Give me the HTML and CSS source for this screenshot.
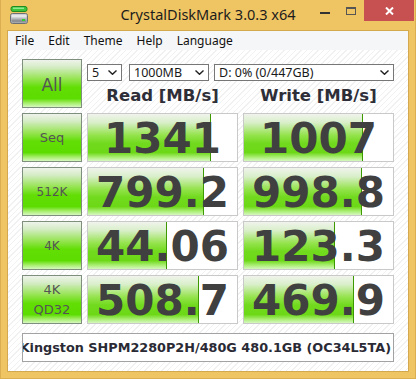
FILE: index.html
```html
<!DOCTYPE html>
<html lang="en">
<head>
    <meta charset="UTF-8">
    <title>CrystalDiskMark 3.0.3 x64</title>
    <link rel="stylesheet" href="styles.css">
</head>
<body>
    <div class="window">
        <div class="titlebar">
            <svg class="app-icon" width="18" height="18" viewBox="0 0 18 18">
                <rect x="1" y="0.5" width="16" height="5" rx="2" fill="#3cc43c" stroke="#1f8a1f"/>
                <rect x="3" y="1.5" width="11" height="1.5" fill="#8fe88f"/>
                <rect x="0.5" y="7.5" width="17" height="10" rx="2" fill="#b9bcbf" stroke="#6c7075"/>
                <rect x="1.5" y="8.5" width="15" height="3" fill="#e4e6e8"/>
                <rect x="1.5" y="13.5" width="15" height="3" fill="#8d9195"/>
                <rect x="12" y="13" width="3" height="2" fill="#2fd12f"/>
            </svg>
            <div class="title">CrystalDiskMark 3.0.3 x64</div>
            <div class="controls">
                <div class="ctl">
                    <svg width="10" height="10" viewBox="0 0 10 10"><rect x="0" y="6" width="10" height="2" fill="#333"/></svg>
                </div>
                <div class="ctl">
                    <svg width="10" height="8" viewBox="0 0 10 8"><rect x="0.5" y="0.5" width="9" height="7" fill="none" stroke="#555"/><rect x="0" y="0" width="10" height="2" fill="#555"/></svg>
                </div>
                <div class="ctl close">
                    <svg width="9" height="8" viewBox="0 0 9 8"><path d="M1 0.5 L8 7.5 M8 0.5 L1 7.5" stroke="#fff" stroke-width="2"/></svg>
                </div>
            </div>
        </div>

        <div class="frame">
            <div class="menu">
                <span>File</span>
                <span>Edit</span>
                <span>Theme</span>
                <span>Help</span>
                <span>Language</span>
            </div>

            <div class="client">
                <div class="grid">
                    <div class="btn btn-all">All</div>
                    <div class="top">
                        <div class="selects">
                            <div class="sel sel-count">5 <svg class="chev" width="9" height="5" viewBox="0 0 9 5"><path d="M0.5 0.5 L4.5 4.3 L8.5 0.5" fill="none" stroke="#222" stroke-width="1.4"/></svg></div>
                            <div class="sel sel-size">1000MB <svg class="chev" width="9" height="5" viewBox="0 0 9 5"><path d="M0.5 0.5 L4.5 4.3 L8.5 0.5" fill="none" stroke="#222" stroke-width="1.4"/></svg></div>
                            <div class="sel sel-drive">D: 0% (0/447GB) <svg class="chev" width="9" height="5" viewBox="0 0 9 5"><path d="M0.5 0.5 L4.5 4.3 L8.5 0.5" fill="none" stroke="#222" stroke-width="1.4"/></svg></div>
                        </div>
                        <div class="head">Read [MB/s]</div>
                        <div class="head">Write [MB/s]</div>
                    </div>

                    <div class="btn btn-seq">Seq</div>
                    <div class="val"><div class="fill" style="width:123px"></div><span class="num">1341</span></div>
                    <div class="val"><div class="fill" style="width:119px"></div><span class="num">1007</span></div>

                    <div class="btn">512K</div>
                    <div class="val"><div class="fill" style="width:116px"></div><span class="num">799.2</span></div>
                    <div class="val"><div class="fill" style="width:118px"></div><span class="num">998.8</span></div>

                    <div class="btn">4K</div>
                    <div class="val"><div class="fill" style="width:79px"></div><span class="num">44.06</span></div>
                    <div class="val"><div class="fill" style="width:91px"></div><span class="num">123.3</span></div>

                    <div class="btn btn-qd">4K<br>QD32</div>
                    <div class="val"><div class="fill" style="width:111px"></div><span class="num">508.7</span></div>
                    <div class="val"><div class="fill" style="width:110px"></div><span class="num">469.9</span></div>
                </div>

                <div class="drive"><span>Kingston SHPM2280P2H/480G 480.1GB (OC34L5TA)</span></div>
            </div>
        </div>
    </div>
</body>
</html>
```

FILE: styles.css
```css
* {
    box-sizing: border-box;
}

body {
    margin: 0;
    font-family: "DejaVu Sans", sans-serif;
    background: #efc463;
}

.window {
    width: 416px;
    height: 379px;
    background: #efc463;
    border: 1px solid #dcae52;
    border-top: none;
    display: flex;
    flex-direction: column;
}

/* title bar */
.titlebar {
    height: 30px;
    display: grid;
    grid-template-columns: 1fr auto 1fr;
    align-items: start;
}

.app-icon {
    margin: 6px 0 0 9px;
}

.title {
    font-family: "Noto Sans", sans-serif;
    font-size: 14.5px;
    color: #1c1c1c;
    padding-top: 4px;
}

.controls {
    justify-self: end;
    display: flex;
    margin-right: 1px;
}

.ctl {
    width: 26px;
    height: 21px;
    display: flex;
    align-items: center;
    justify-content: center;
}

.close {
    width: 50px;
    background: #c75050;
}

/* frame */
.frame {
    flex: 1;
    margin: 0 6px 6px 6px;
    border: 1px solid #d3a84f;
    display: flex;
    flex-direction: column;
}

.menu {
    height: 19px;
    background: #f5f6f7;
    display: flex;
    align-items: center;
    font-family: "Noto Sans", sans-serif;
    font-size: 12px;
    color: #111;
}

.menu span {
    padding: 0 7px;
}

.client {
    flex: 1;
    padding: 9px 14px;
    background: repeating-linear-gradient(135deg, #ffffff 0 3px, #f1f1f1 3px 4px);
}

.grid {
    display: grid;
    grid-template-columns: 60px 151px 151px;
    grid-template-rows: repeat(5, 49px);
    gap: 5px;
}

/* green buttons */
.btn {
    border: 1px solid #7f8f7d;
    background: linear-gradient(#eef3ea 0%, #d5ecc6 15%, #96e452 40%, #62de05 58%, #5cdc00 82%, #a2ed64 91%, #d6f8c0 100%);
    display: flex;
    align-items: center;
    justify-content: center;
    text-align: center;
    color: #545454;
    font-size: 12px;
}

.btn-all {
    font-size: 17px;
    padding-top: 2px;
}

.btn-seq {
    font-size: 13px;
}

.btn-qd {
    font-size: 13px;
    line-height: 20px;
}

.top {
    grid-column: 2 / 4;
    display: grid;
    grid-template-columns: 151px 151px;
    grid-template-rows: 17px 1fr;
    column-gap: 5px;
    padding-top: 5px;
}

.selects {
    grid-column: 1 / 3;
    display: flex;
    gap: 5px;
}

.sel {
    height: 17px;
    border: 1px solid #777;
    background: #fff;
    display: flex;
    align-items: center;
    justify-content: space-between;
    padding: 0 4px 0 4px;
    font-family: "Noto Sans", sans-serif;
    font-size: 12.5px;
    color: #1a1a1a;
}

.sel-count {
    width: 35px;
    margin-right: 2px;
}

.sel-size {
    width: 80px;
}

.sel-drive {
    width: 180px;
}

.head {
    align-self: center;
    text-align: center;
    font-weight: bold;
    font-size: 16.5px;
    color: #2e2e38;
    padding-top: 1px;
}

/* result boxes */
.val {
    border: 1px solid #c9c9c9;
    background: #fff;
    display: grid;
}

.fill {
    grid-area: 1 / 1;
    background: linear-gradient(#f0f4ec 0%, #d9efca 18%, #94e34c 45%, #72da1e 62%, #6cd816 82%, #aaee74 92%, #d6f8c0 100%);
    border-right: 1px solid #3c9a00;
}

.num {
    grid-area: 1 / 1;
    align-self: center;
    text-align: center;
    font-weight: bold;
    font-size: 42px;
    line-height: 1;
    padding-top: 3px;
    color: #404040;
}

.drive {
    margin-top: 9px;
    height: 29px;
    border: 1px solid #a3a3a3;
    background: #fff;
    display: flex;
    align-items: center;
    justify-content: flex-end;
    overflow: hidden;
    white-space: nowrap;
    padding-right: 2px;
    font-weight: bold;
    font-size: 12.8px;
    color: #2a2a35;
}
```
